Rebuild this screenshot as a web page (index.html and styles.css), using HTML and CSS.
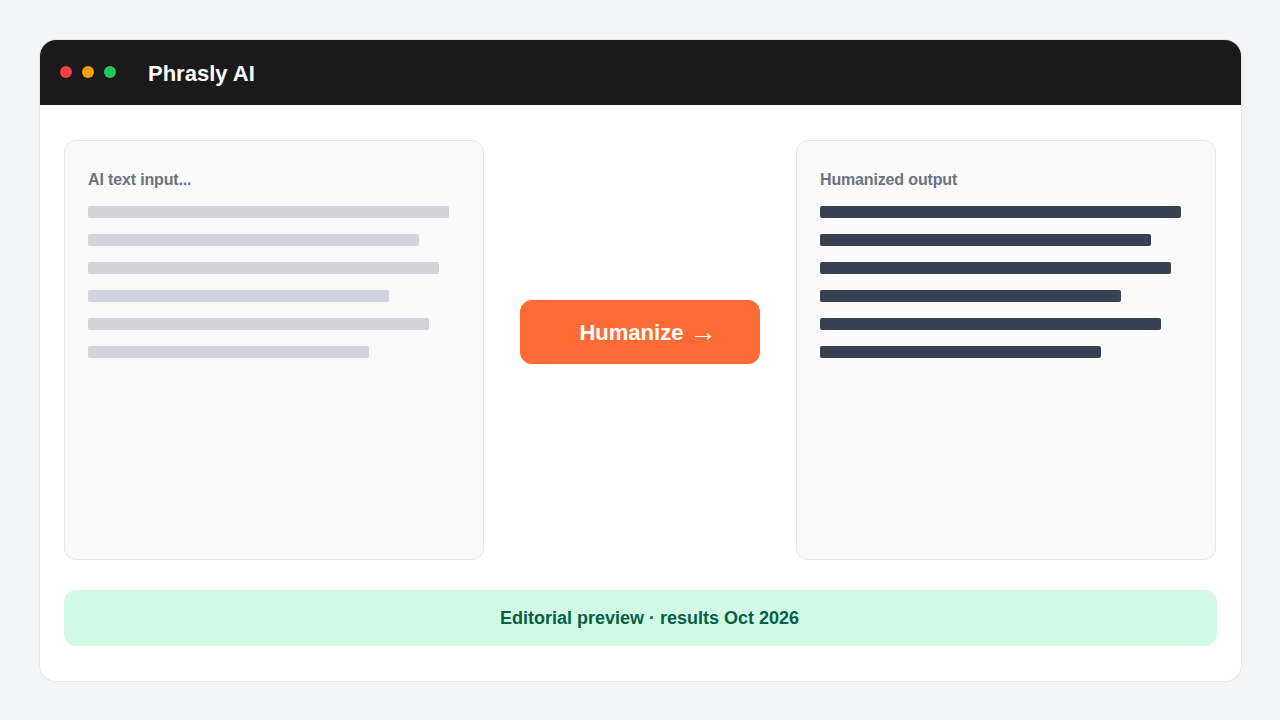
FILE: index.html
```html
<!DOCTYPE html>
<html lang="en">
<head>
<meta charset="utf-8">
<title>Phrasly AI</title>
<link rel="stylesheet" href="styles.css">
</head>
<body>
  <div class="window">
    <header class="titlebar">
      <div class="dots">
        <span class="dot dot-red"></span>
        <span class="dot dot-amber"></span>
        <span class="dot dot-green"></span>
      </div>
      <h1 class="app-name">Phrasly AI</h1>
    </header>
    <main class="content">
      <div class="workspace">
        <section class="panel panel-input">
          <h2 class="panel-label">AI text input...</h2>
          <div class="lines">
            <span class="line" style="width:361px"></span>
            <span class="line" style="width:331px"></span>
            <span class="line" style="width:351px"></span>
            <span class="line" style="width:301px"></span>
            <span class="line" style="width:341px"></span>
            <span class="line" style="width:281px"></span>
          </div>
        </section>
        <div class="action">
          <button class="humanize" type="button">Humanize <span class="arrow">→</span></button>
        </div>
        <section class="panel panel-output">
          <h2 class="panel-label">Humanized output</h2>
          <div class="lines">
            <span class="line" style="width:361px"></span>
            <span class="line" style="width:331px"></span>
            <span class="line" style="width:351px"></span>
            <span class="line" style="width:301px"></span>
            <span class="line" style="width:341px"></span>
            <span class="line" style="width:281px"></span>
          </div>
        </section>
      </div>
      <div class="notice">Editorial preview · results Oct 2026</div>
    </main>
  </div>
</body>
</html>
```

FILE: styles.css
```css
* {
  box-sizing: border-box;
}

html,
body {
  margin: 0;
  padding: 0;
}

body {
  background: #f3f4f6;
  font-family: "Liberation Sans", Arial, sans-serif;
  padding: 40px;
}

.window {
  width: 1201px;
  background: #ffffff;
  border-radius: 16px;
  box-shadow: 0 0 0 1px #e5e7eb;
  overflow: hidden;
}

/* dark title bar with traffic-light dots */
.titlebar {
  height: 65px;
  background: #1a1a1a;
  display: flex;
  align-items: center;
  padding: 0 0 0 20px;
  gap: 32px;
}

.dots {
  display: flex;
  gap: 10px;
  margin-top: -1px;
}

.dot {
  width: 12px;
  height: 12px;
  border-radius: 50%;
}

.dot-red { background: #ef4444; }
.dot-amber { background: #f59e0b; }
.dot-green { background: #22c55e; }

.app-name {
  margin: 0;
  color: #ffffff;
  font-size: 22px;
  font-weight: 700;
  line-height: 1;
  margin-top: 3px;
}

.content {
  padding: 35px 24px 35px;
  display: flex;
  flex-direction: column;
  gap: 30px;
}

.workspace {
  display: grid;
  grid-template-columns: 420px 240px 420px;
  gap: 36px;
}

.panel {
  height: 420px;
  background: #fafafa;
  border: 1px solid #e5e7eb;
  border-radius: 12px;
  padding: 29px 23px;
}

.panel-label {
  margin: 0;
  font-size: 16px;
  font-weight: 700;
  color: #6b7280;
  line-height: 20px;
  letter-spacing: -0.15px;
}

.lines {
  display: flex;
  flex-direction: column;
  align-items: flex-start;
  gap: 16px;
  margin-top: 16px;
}

.line {
  display: block;
  height: 12px;
  border-radius: 2px;
}

.panel-input .line { background: #d1d5db; }
.panel-output .line { background: #374151; }

.action {
  display: flex;
  flex-direction: column;
  justify-content: center;
  padding-bottom: 36px;
}

.humanize {
  height: 64px;
  width: 100%;
  border: 0;
  border-radius: 12px;
  background: #ff6b35;
  color: #ffffff;
  font-family: inherit;
  font-size: 22px;
  font-weight: 700;
  line-height: 1;
  padding: 0 0 0 16px;
  cursor: pointer;
}

.arrow {
  font-family: "Liberation Serif", serif;
  font-weight: 400;
  font-size: 27px;
  line-height: 1;
  vertical-align: -1px;
}

.notice {
  height: 56px;
  border-radius: 12px;
  background: #d1fae5;
  color: #065f46;
  font-size: 18px;
  font-weight: 700;
  padding-left: 18px;
  display: flex;
  align-items: center;
  justify-content: center;
}
```
